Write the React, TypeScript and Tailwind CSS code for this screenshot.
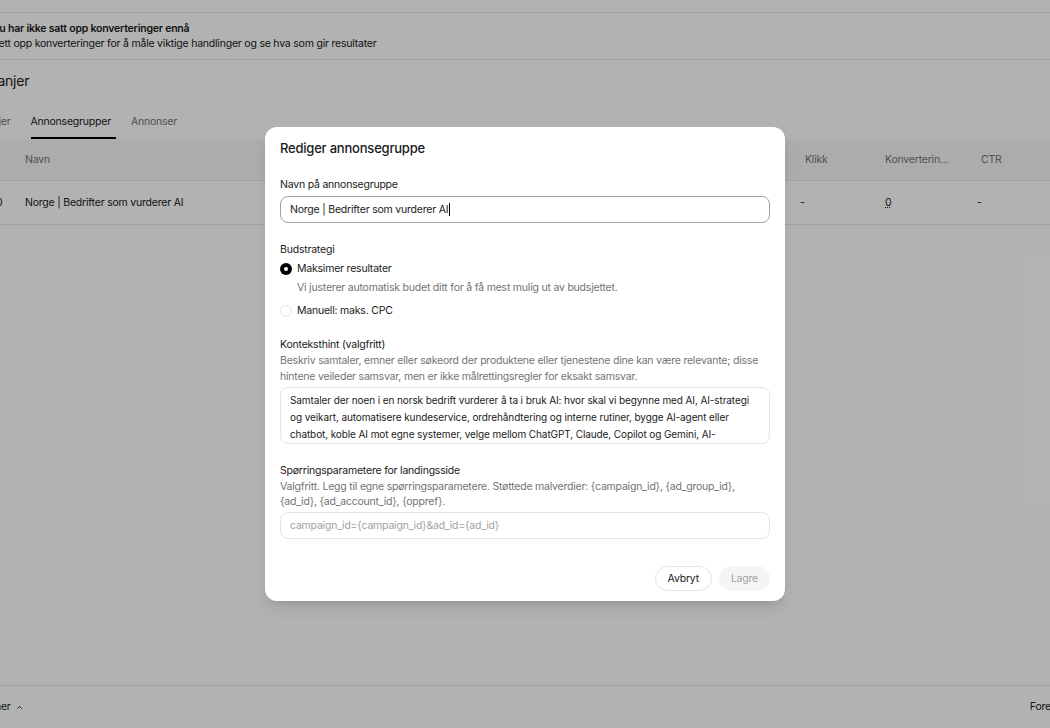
import React from 'react';

const font = { fontFamily: 'Inter, "Noto Sans", sans-serif' };

const Radio = ({ checked }: { checked: boolean }) =>
  checked ? (
    <span className="flex h-3 w-3 shrink-0 items-center justify-center rounded-full bg-black">
      <span className="h-1 w-1 rounded-full bg-white" />
    </span>
  ) : (
    <span className="h-3 w-3 shrink-0 rounded-full border border-neutral-200 bg-white" />
  );

const Background = () => (
  <div className="flex h-[728px] flex-col text-[10.5px] tracking-[-0.02em] text-[#1a1a1a]">
    <div className="h-[13px] border-b border-neutral-200" />
    <div className="-ml-[8px] border-b border-neutral-200 py-[8px]">
      <div className="font-semibold leading-[15px]">Du har ikke satt opp konverteringer ennå</div>
      <div className="leading-[15px]">Sett opp konverteringer for å måle viktige handlinger og se hva som gir resultater</div>
    </div>
    <div className="-ml-[40px] flex h-[41px] items-center text-[14px]">Kampanjer</div>
    <div className="-ml-[41px] flex h-[38px] items-end">
      <div className="mr-[20px] pb-[9px] text-neutral-500">Kampanjer</div>
      <div className="mr-[15px] border-b-2 border-black pb-[7px] pr-[5px]">Annonsegrupper</div>
      <div className="pb-[9px] text-neutral-500">Annonser</div>
    </div>
    <div className="flex h-[42px] items-center border-b border-neutral-200 bg-[#f7f7f7] text-neutral-500">
      <div className="w-[25px]"> </div>
      <div className="w-[780px]">Navn</div>
      <div className="w-[80px]">Klikk</div>
      <div className="w-[96px]">Konverterin...</div>
      <div>CTR</div>
    </div>
    <div className="flex h-[44px] items-center border-b border-neutral-200">
      <div className="-ml-[4px] w-[29px]">0</div>
      <div className="w-[775px]">Norge | Bedrifter som vurderer AI</div>
      <div className="w-[85px]">-</div>
      <div className="w-[92px]">
        <span className="underline decoration-dotted">0</span>
      </div>
      <div>-</div>
    </div>
    <div className="flex-1" />
    <div className="flex h-[43px] items-center justify-between border-t border-neutral-200">
      <div className="-ml-[32px] flex items-center gap-[4px]">
        Kolonner
        <svg width="9" height="9" viewBox="0 0 24 24" fill="none" stroke="currentColor" strokeWidth="2.5">
          <path d="M6 15l6-6 6 6" />
        </svg>
      </div>
      <div className="-mr-[24px]">Forenklet</div>
    </div>
  </div>
);

export default function App() {
  return (
    <div className="relative h-[728px] w-full overflow-hidden bg-white" style={font}>
      <Background />
      <div className="absolute inset-0 flex items-center justify-center bg-black/30">
        <div className="w-[520px] rounded-xl bg-white px-[15px] pb-[10px] pt-[12px] text-[10.5px] tracking-[-0.02em] text-[#1a1a1a] shadow-lg">
          <h2 className="text-[13px] font-medium leading-[18px]">Rediger annonsegruppe</h2>

          <div className="mt-[20px]">
            <label className="block leading-[16px]">Navn på annonsegruppe</label>
            <div className="mt-[3px] flex h-[27px] items-center rounded-lg border border-neutral-400 px-[9px]">
              Norge | Bedrifter som vurderer AI<span className="ml-[1px] h-[13px] w-px bg-black" />
            </div>
          </div>

          <div className="mt-[19px]">
            <div className="leading-[16px]">Budstrategi</div>
            <div className="mt-[3px] flex items-center gap-[5px] leading-[16px]">
              <Radio checked />
              Maksimer resultater
            </div>
            <div className="mt-[3px] pl-[17px] leading-[16px] text-neutral-500">
              Vi justerer automatisk budet ditt for å få mest mulig ut av budsjettet.
            </div>
            <div className="mt-[7px] flex items-center gap-[5px] leading-[16px]">
              <Radio checked={false} />
              Manuell: maks. CPC
            </div>
          </div>

          <div className="mt-[18px]">
            <div className="leading-[16px]">Konteksthint (valgfritt)</div>
            <div className="leading-[16px] text-neutral-500">
              Beskriv samtaler, emner eller søkeord der produktene eller tjenestene dine kan være relevante; disse
              hintene veileder samsvar, men er ikke målrettingsregler for eksakt samsvar.
            </div>
            <div className="mt-[2px] h-[57px] overflow-hidden rounded-lg border border-neutral-200 px-[9px] pt-[4px] text-[10px] leading-[17px] tracking-[-0.01em]">
              Samtaler der noen i en norsk bedrift vurderer å ta i bruk AI: hvor skal vi begynne med AI, AI-strategi
              og veikart, automatisere kundeservice, ordrehåndtering og interne rutiner, bygge AI-agent eller
              chatbot, koble AI mot egne systemer, velge mellom ChatGPT, Claude, Copilot og Gemini, AI-opplæring
              for ansatte, krav i EU AI Act og det å finne et AI-byrå eller en AI-konsulent i Norge.
            </div>
          </div>

          <div className="mt-[19px]">
            <div className="leading-[16px]">Spørringsparametere for landingsside</div>
            <div className="leading-[15px] text-neutral-500">
              Valgfritt. Legg til egne spørringsparametere. Støttede malverdier: {'{campaign_id}'}, {'{ad_group_id}'},
              {' '}{'{ad_id}'}, {'{ad_account_id}'}, {'{oppref}'}.
            </div>
            <div className="mt-[3px] flex h-[27px] items-center rounded-lg border border-neutral-200 px-[9px] text-neutral-400">
              campaign_id={'{campaign_id}'}&amp;ad_id={'{ad_id}'}
            </div>
          </div>

          <div className="mt-[27px] flex justify-end gap-[7px]">
            <button className="h-[25px] rounded-full border border-neutral-200 px-[12px]">Avbryt</button>
            <button className="h-[25px] rounded-full bg-neutral-100 px-[12px] text-neutral-400">Lagre</button>
          </div>
        </div>
      </div>
    </div>
  );
}
